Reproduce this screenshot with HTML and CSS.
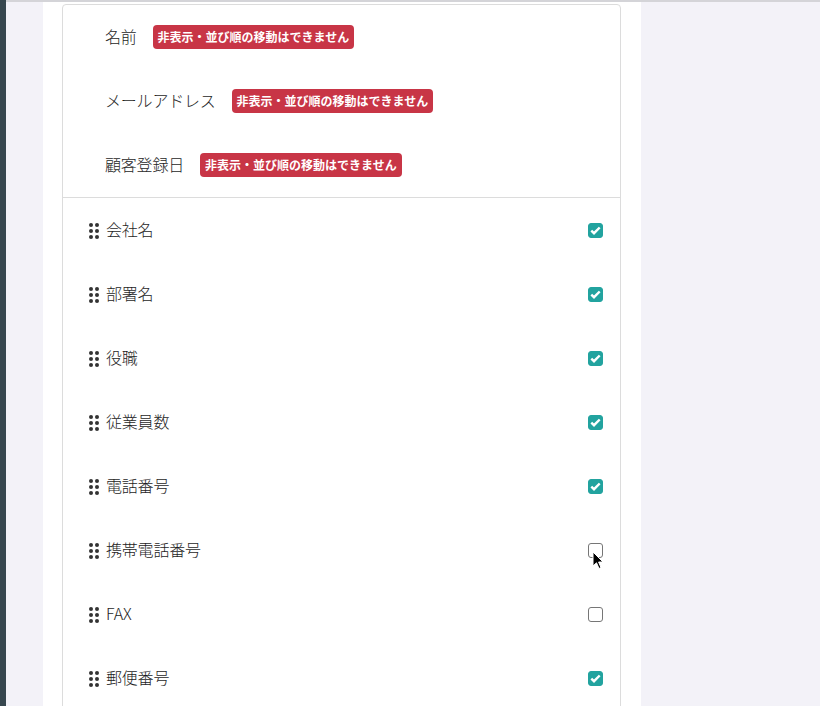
FILE: index.html
```html
<!DOCTYPE html>
<html lang="ja">
<head>
    <meta charset="UTF-8">
    <title>表示項目の設定</title>
    <link rel="stylesheet" href="styles.css">
</head>
<body>
    <div class="sidebar"></div>
    <div class="main">
        <div class="panel">
            <div class="card">
                <div class="fixed-section">
                    <div class="fixed-row">
                        <span class="label">名前</span>
                        <span class="badge">非表示・並び順の移動はできません</span>
                    </div>
                    <div class="fixed-row">
                        <span class="label">メールアドレス</span>
                        <span class="badge">非表示・並び順の移動はできません</span>
                    </div>
                    <div class="fixed-row">
                        <span class="label">顧客登録日</span>
                        <span class="badge">非表示・並び順の移動はできません</span>
                    </div>
                </div>

                <div class="sort-list" id="sortList"></div>
            </div>
        </div>
    </div>

    <svg class="cursor" width="12" height="19" viewBox="0 0 12 19">
        <path d="M1 1 L1 15 L4.5 11.8 L7 17.5 L9 16.6 L6.6 11 L11 11 Z" fill="#000" stroke="#fff" stroke-width="1"/>
    </svg>

    <script>
        const fields = [
            { name: '会社名', visible: true },
            { name: '部署名', visible: true },
            { name: '役職', visible: true },
            { name: '従業員数', visible: true },
            { name: '電話番号', visible: true },
            { name: '携帯電話番号', visible: false },
            { name: 'FAX', visible: false },
            { name: '郵便番号', visible: true }
        ];

        const checkSvg = '<svg width="11" height="9" viewBox="0 0 11 9"><path d="M1.3 4.6 L4 7.2 L9.7 1.5" fill="none" stroke="#fff" stroke-width="2.4"/></svg>';

        // Render sortable rows
        function renderList() {
            const list = document.getElementById('sortList');
            list.innerHTML = fields.map((f, i) => `
                <div class="sort-row">
                    <span class="handle"><i></i><i></i><i></i><i></i><i></i><i></i></span>
                    <span class="label">${f.name}</span>
                    <span class="check ${f.visible ? 'checked' : ''}" data-index="${i}">${f.visible ? checkSvg : ''}</span>
                </div>
            `).join('');
        }

        document.getElementById('sortList').addEventListener('click', (e) => {
            const box = e.target.closest('.check');
            if (!box) return;
            const f = fields[box.dataset.index];
            f.visible = !f.visible;
            renderList();
        });

        renderList();
    </script>
</body>
</html>
```

FILE: styles.css
```css
* {
    margin: 0;
    padding: 0;
    box-sizing: border-box;
}

body {
    font-family: "Noto Sans CJK JP", "Noto Sans", sans-serif;
    background: #f3f2f8;
    color: #333;
    display: flex;
    height: 706px;
    overflow: hidden;
}

.sidebar {
    width: 6px;
    background: #37474f;
    flex-shrink: 0;
}

.main {
    flex: 1;
    border-top: 2px solid #d4d4d8;
    padding-left: 37px;
}

.panel {
    width: 598px;
    height: 100%;
    background: #fff;
    padding: 2px 20px 0 19px;
}

.card {
    border: 1px solid #dcdcdc;
    border-radius: 4px;
    background: #fff;
}

.fixed-section {
    border-bottom: 1px solid #dcdcdc;
}

.fixed-row {
    height: 64px;
    display: flex;
    align-items: center;
    padding-left: 42px;
    gap: 16px;
}

.label {
    font-size: 16px;
    font-weight: 300;
    color: #1e1e1e;
    letter-spacing: -0.2px;
    padding-bottom: 2px;
}

.badge {
    background: #c83546;
    color: #fff;
    font-size: 12px;
    font-weight: 700;
    padding: 3px 5px;
    border-radius: 4px;
    line-height: 18px;
}

.sort-row {
    height: 64px;
    display: flex;
    align-items: center;
    padding: 0 17px 0 25px;
}

.handle {
    width: 10px;
    height: 16px;
    display: grid;
    grid-template-columns: 4px 4px;
    grid-template-rows: repeat(3, 4px);
    column-gap: 2px;
    row-gap: 2px;
    margin: 2px 7px 0 1px;
}

.handle i {
    width: 4px;
    height: 4px;
    border-radius: 50%;
    background: #333;
}

.sort-row .label {
    flex: 1;
}

.check {
    width: 15px;
    height: 15px;
    border-radius: 3px;
    border: 1px solid #767676;
    display: flex;
    align-items: center;
    justify-content: center;
    cursor: pointer;
}

.check.checked {
    background: #22a39f;
    border-color: #22a39f;
}

.cursor {
    position: absolute;
    left: 592px;
    top: 551px;
}
```
